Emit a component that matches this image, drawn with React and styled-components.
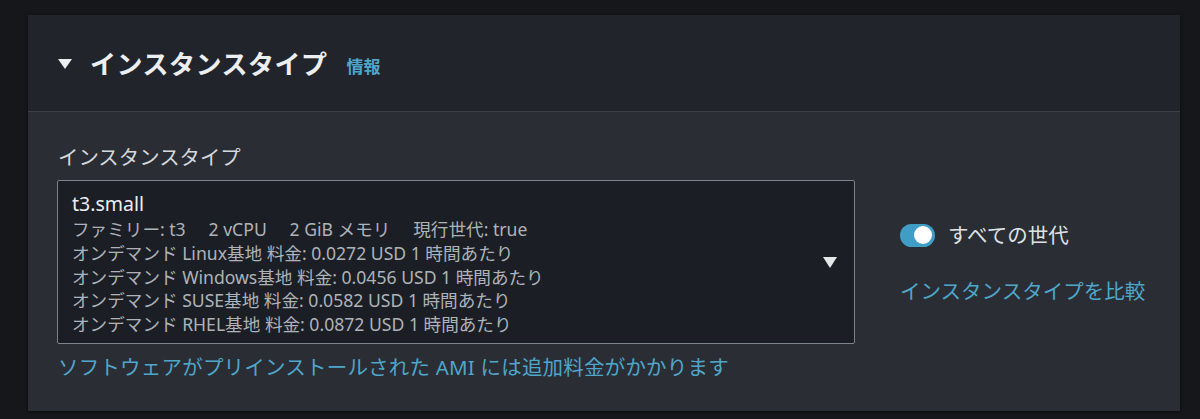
import React, { useState } from 'react';
import styled, { createGlobalStyle } from 'styled-components';

const GlobalStyle = createGlobalStyle`
  body {
    margin: 0;
    background-color: #16171b;
    font-family: "Noto Sans", "Noto Sans CJK JP", sans-serif;
  }
`;

const Page = styled.div`
  padding: 15px 20px 8px 28px;
`;

const Card = styled.section`
  width: 1152px;
  background-color: #2a2d33;
  box-shadow: 0 1px 3px rgba(0, 0, 0, 0.6);
`;

const Header = styled.div`
  display: flex;
  align-items: center;
  height: 96px;
  padding-left: 30px;
  background-color: #21242b;
  border-bottom: 1px solid #3b3f46;
`;

const Caret = styled.span`
  width: 0;
  height: 0;
  border-left: 7px solid transparent;
  border-right: 7px solid transparent;
  border-top: 10px solid #eceef0;
  margin-right: 18px;
  margin-top: 2px;
`;

const Title = styled.h2`
  margin: 0;
  font-size: 26px;
  font-weight: 700;
  color: #eceef0;
  letter-spacing: 0.5px;
`;

const Info = styled.a`
  margin-left: 19px;
  margin-top: 4px;
  font-size: 17px;
  font-weight: 700;
  color: #4fa6cb;
  text-decoration: none;
`;

const Body = styled.div`
  display: flex;
  gap: 45px;
  height: 299px;
  box-sizing: border-box;
  padding: 33px 29px 0;
`;

const Field = styled.div`
  display: flex;
  flex-direction: column;
`;

const Label = styled.label`
  padding-left: 1px;
  font-size: 20.4px;
  line-height: 24px;
  color: #d5d9dd;
  margin-bottom: 11px;
`;

const Select = styled.div`
  position: relative;
  width: 798px;
  box-sizing: border-box;
  padding: 9px 40px 6px 14px;
  background-color: #1b1e25;
  border: 1px solid #7b838d;
  border-radius: 2px;
`;

const Value = styled.div`
  font-size: 19.5px;
  line-height: 28px;
  color: #eceef0;
`;

const Detail = styled.div`
  font-size: 17.6px;
  line-height: 23.8px;
  color: #aeb3b9;
  white-space: pre;
`;

const DropArrow = styled.span`
  position: absolute;
  right: 17px;
  top: 76px;
  width: 0;
  height: 0;
  border-left: 7px solid transparent;
  border-right: 7px solid transparent;
  border-top: 11px solid #e4e6e8;
`;

const Link = styled.a`
  font-size: 20.5px;
  line-height: 24px;
  color: #4fa6cb;
  text-decoration: none;
  cursor: pointer;
`;

const Note = styled(Link)`
  margin-top: 11px;
  padding-left: 1px;
  letter-spacing: 0.2px;
`;

const Side = styled.div`
  display: flex;
  flex-direction: column;
  align-items: flex-start;
  padding-top: 78px;
  gap: 32px;
`;

const ToggleRow = styled.label`
  display: flex;
  align-items: center;
  gap: 13px;
  font-size: 20.5px;
  line-height: 24px;
  color: #dfe2e5;
  cursor: pointer;
`;

const Track = styled.span`
  position: relative;
  width: 35px;
  height: 23px;
  border-radius: 12px;
  background-color: ${(p) => (p.on ? '#3f9dc6' : '#5f6b7a')};
`;

const Knob = styled.span`
  position: absolute;
  top: 2.5px;
  left: ${(p) => (p.on ? '14px' : '3px')};
  width: 18px;
  height: 18px;
  border-radius: 50%;
  background-color: #ffffff;
`;

const details = [
  'ファミリー: t3     2 vCPU     2 GiB メモリ     現行世代: true',
  'オンデマンド Linux基地 料金: 0.0272 USD 1 時間あたり',
  'オンデマンド Windows基地 料金: 0.0456 USD 1 時間あたり',
  'オンデマンド SUSE基地 料金: 0.0582 USD 1 時間あたり',
  'オンデマンド RHEL基地 料金: 0.0872 USD 1 時間あたり',
];

const App = () => {
  const [allGenerations, setAllGenerations] = useState(true);

  return (
    <Page>
      <GlobalStyle />
      <Card>
        <Header>
          <Caret />
          <Title>インスタンスタイプ</Title>
          <Info>情報</Info>
        </Header>
        <Body>
          <Field>
            <Label>インスタンスタイプ</Label>
            <Select>
              <Value>t3.small</Value>
              {details.map((line) => (
                <Detail key={line}>{line}</Detail>
              ))}
              <DropArrow />
            </Select>
            <Note>ソフトウェアがプリインストールされた AMI には追加料金がかかります</Note>
          </Field>
          <Side>
            <ToggleRow onClick={() => setAllGenerations(!allGenerations)}>
              <Track on={allGenerations}>
                <Knob on={allGenerations} />
              </Track>
              すべての世代
            </ToggleRow>
            <Link>インスタンスタイプを比較</Link>
          </Side>
        </Body>
      </Card>
    </Page>
  );
};

export default App;
